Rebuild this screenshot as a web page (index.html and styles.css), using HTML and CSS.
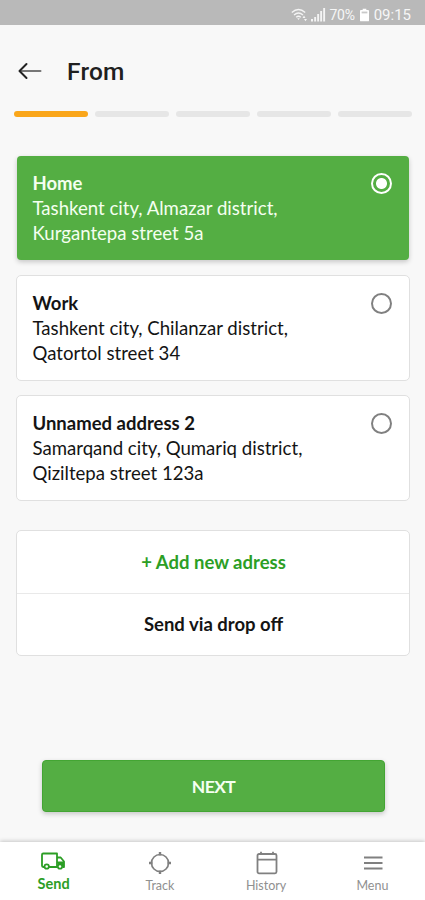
FILE: index.html
```html
<!DOCTYPE html>
<html lang="en">
<head>
<meta charset="utf-8">
<meta name="viewport" content="width=device-width, initial-scale=1">
<title>From</title>
<link rel="stylesheet" href="styles.css">
</head>
<body>
<div class="app">
  <div class="status">
    <svg class="wifi" width="17" height="14" viewBox="0 0 17 14"><g fill="none" stroke="#f4f4f4" stroke-width="1.3"><path d="M.8 4.5Q7.5-1.5 14.2 4.5M3 7Q7.5 3 12 7M5.2 9.3Q7.5 7.3 9.8 9.3"/></g><path d="M6.2 10.2h2.6L7.5 12zM11.5 10l1.500-2.500 1.500 2.500zM13 11h3l-1.500 2.200z" fill="#f4f4f4"/></svg>
    <svg class="signal" width="15" height="14" viewBox="0 0 15 14" fill="#f4f4f4"><path d="M0 11h2v2.500H0zM3.200 9h1.900v4.500H3.200zM6.200 6h1.900v7.500H6.200zM9.200 3h1.900v10.500H9.200zM12.200 0h1.900v13.500h-1.900z"/></svg>
    <span class="percent">70%</span>
    <svg class="battery" width="9" height="14" viewBox="0 0 10 14"><path d="M3 0h4v1.500h2q1 0 1 1V13q0 1-1 1H1q-1 0-1-1V2.500q0-1 1-1h2z" fill="#fff"/><path d="M1.800 3.200h6.400v2H1.800z" fill="#c9c9c9"/></svg>
    <span class="clock">09:15</span>
  </div>
  <header class="header">
    <svg width="24" height="18" viewBox="0 0 24 18" fill="none" stroke-linecap="round" stroke-linejoin="round"><path d="M2 9h20.500" stroke="#777" stroke-width="2"/><path d="M8.500 2L1.500 9l7 7" stroke="#222" stroke-width="2"/></svg>
    <h1>From</h1>
  </header>
  <div class="steps"><i class="done"></i><i></i><i></i><i></i><i></i></div>
  <main class="content">
    <section class="card selected">
      <div><h2>Home</h2><p>Tashkent city, Almazar district,<br>Kurgantepa street 5a</p></div>
      <span class="radio"></span>
    </section>
    <section class="card">
      <div><h2>Work</h2><p>Tashkent city, Chilanzar district,<br>Qatortol street 34</p></div>
      <span class="radio"></span>
    </section>
    <section class="card">
      <div><h2>Unnamed address 2</h2><p>Samarqand city, Qumariq district,<br>Qiziltepa street 123a</p></div>
      <span class="radio"></span>
    </section>
    <section class="actions">
      <a class="add">+ Add new adress</a>
      <a>Send via drop off</a>
    </section>
  </main>
  <button class="next">NEXT</button>
  <nav class="tabs">
    <a class="tab active">
      <svg width="26" height="26" viewBox="0 0 26 26" fill="none" stroke="#2c9e25" stroke-width="1.800" stroke-linejoin="round"><path d="M4 18H3.200Q2 18 2 16.800V5.700Q2 4.500 3.200 4.500H17V18H9"/><path d="M17 8.500h3.700l3.300 4V18h-1M17 13.300h7"/><path d="M18 14h6v3h-6z" fill="#2c9e25" stroke="none"/><circle cx="6.700" cy="17.500" r="2.200" fill="#fff"/><circle cx="20" cy="17.500" r="2.200" fill="#fff"/></svg>
      <span>Send</span>
    </a>
    <a class="tab">
      <svg width="26" height="26" viewBox="0 0 26 26" fill="none" stroke="#808080" stroke-width="1.700"><circle cx="14" cy="14" r="8.500"/><path d="M14 3V6.500M14 21.500V25M3 14h3.500M21.500 14H25" stroke-width="2.400"/></svg>
      <span>Track</span>
    </a>
    <a class="tab">
      <svg width="26" height="26" viewBox="0 0 26 26" fill="none" stroke="#808080" stroke-width="1.800"><rect x="4.500" y="5" width="19" height="19.300" rx="1.500"/><path d="M4.500 10.700h19M8 2.800v3M20 2.800v3"/></svg>
      <span>History</span>
    </a>
    <a class="tab">
      <svg width="26" height="26" viewBox="0 0 26 26" stroke="#808080" stroke-width="2"><path d="M5 8.500h18.500M5 14h18.500M5 19.500h18.500"/></svg>
      <span>Menu</span>
    </a>
  </nav>
</div>
</body>
</html>
```
FILE: styles.css
```css
* { box-sizing: border-box; }
body { margin: 0; background: #f8f8f8; color: #141414; font-family: Lato, sans-serif; }
h1, h2, p { margin: 0; }
.app { height: 900px; display: flex; flex-direction: column; overflow: hidden; }
.status { height: 25px; flex: none; background: #b9b9b9; color: #f6f6f6; display: flex; align-items: center; justify-content: flex-end; padding: 4px 14px 0 0; font: 400 15px/20px Roboto, sans-serif; }
.wifi { margin-right: 3px; }
.signal { margin-right: 4px; }
.percent { font-size: 14px; letter-spacing: -.3px; }
.battery { margin: 0 5px; }
.header { height: 86px; flex: none; display: flex; align-items: center; gap: 25px; padding: 6px 0 0 18px; }
.header h1 { font: 500 24.500px/30px Roboto, sans-serif; color: #202020; padding-top: 1px; letter-spacing: .2px; }
.steps { display: flex; gap: 7px; padding: 0 13px 0 14px; flex: none; }
.steps i { flex: 1; height: 6px; border-radius: 3px; background: #e6e6e6; }
.steps .done { background: #faa61a; }
.content { padding: 38px 15px 0 16px; display: flex; flex-direction: column; gap: 14px; }
.card { height: 106px; display: flex; justify-content: space-between; align-items: flex-start; background: #fff; border: 1px solid #e0e0e0; border-radius: 5px; padding: 15px 17px 0 15.500px; }
.card h2 { font-size: 18.500px; line-height: 25px; font-weight: 700; }
.card p { font-size: 18.600px; line-height: 25px; white-space: nowrap; }
.radio { width: 21px; height: 21px; border: 2px solid #808080; border-radius: 50%; margin-top: 2px; flex: none; }
.selected { height: 104px; margin: 1px; border: 0; border-radius: 4px; background: #54ae43; color: #f4fff0; box-shadow: 0 2px 5px #0003; }
.selected .radio { border-color: #fff; background: radial-gradient(circle, #fff 5px, transparent 6px); }
.actions { margin-top: 15px; height: 126px; border: 1px solid #e0e0e0; border-radius: 5px; background: #fff; display: flex; flex-direction: column; }
.actions a { flex: 1; display: flex; align-items: center; justify-content: center; font-size: 18.500px; font-weight: 700; padding-left: 1px; }
.actions .add { color: #2c9e25; border-bottom: 1px solid #e9e9e9; }
.next { margin: auto 40px 30px 42px; height: 52px; flex: none; border: 1px solid #43a533; border-radius: 4px; background: #54ae43; color: #f4fff0; font: 700 17.500px/26px Lato, sans-serif; letter-spacing: -.6px; box-shadow: 0 2px 5px #0003; padding: 2px 0 0; }
.tabs { height: 58px; flex: none; background: #fff; box-shadow: 0 -1px 4px #0003; display: flex; }
.tab { flex: 1; display: flex; flex-direction: column; align-items: center; padding-top: 7px; font-size: 12.500px; line-height: 18px; color: #909090; }
.tab span { padding: 2px 0 0 1px; }
.tab.active { color: #2c9e25; font-size: 14.500px; font-weight: 700; }
.active svg { margin-bottom: -2px; }
```
